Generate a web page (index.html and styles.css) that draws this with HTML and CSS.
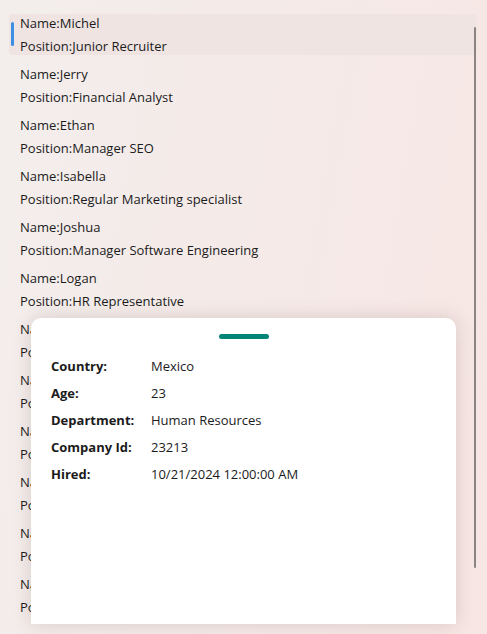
FILE: index.html
```html
<!DOCTYPE html>
<html lang="en">

<head>
    <meta charset="UTF-8">
    <meta name="viewport" content="width=device-width, initial-scale=1.0">
    <title>Employees</title>
    <link rel="stylesheet" href="styles.css">
</head>

<body>

    <div class="page">
        <div class="employee-list">
            <div class="employee selected">
                <div>Name:Michel</div>
                <div>Position:Junior Recruiter</div>
            </div>
            <div class="employee">
                <div>Name:Jerry</div>
                <div>Position:Financial Analyst</div>
            </div>
            <div class="employee">
                <div>Name:Ethan</div>
                <div>Position:Manager SEO</div>
            </div>
            <div class="employee">
                <div>Name:Isabella</div>
                <div>Position:Regular Marketing specialist</div>
            </div>
            <div class="employee">
                <div>Name:Joshua</div>
                <div>Position:Manager Software Engineering</div>
            </div>
            <div class="employee">
                <div>Name:Logan</div>
                <div>Position:HR Representative</div>
            </div>
            <div class="employee">
                <div>Name:Olivia</div>
                <div>Position:Senior Accountant</div>
            </div>
            <div class="employee">
                <div>Name:Sophia</div>
                <div>Position:Product Designer</div>
            </div>
            <div class="employee">
                <div>Name:Noah</div>
                <div>Position:Sales Manager</div>
            </div>
            <div class="employee">
                <div>Name:Emma</div>
                <div>Position:Office Coordinator</div>
            </div>
            <div class="employee">
                <div>Name:Liam</div>
                <div>Position:QA Engineer</div>
            </div>
            <div class="employee">
                <div>Name:Mia</div>
                <div>Position:Legal Advisor</div>
            </div>
        </div>

        <div class="scrollbar"></div>

        <div class="sheet">
            <div class="handle"></div>
            <div class="details">
                <div class="label">Country:</div>
                <div class="value">Mexico</div>
                <div class="label">Age:</div>
                <div class="value">23</div>
                <div class="label">Department:</div>
                <div class="value">Human Resources</div>
                <div class="label">Company Id:</div>
                <div class="value">23213</div>
                <div class="label">Hired:</div>
                <div class="value">10/21/2024 12:00:00 AM</div>
            </div>
        </div>
    </div>

</body>

</html>
```

FILE: styles.css
```css
html,
body {
    margin: 0;
    height: 100%;
}

body {
    font-family: "Segoe UI", "Open Sans", "Noto Sans", sans-serif;
    font-size: 13px;
    color: #1b1b1b;
    background: linear-gradient(100deg, #f3eeec 0%, #f5e9e7 60%, #f7e6e3 100%);
    overflow: hidden;
}

.page {
    position: relative;
    height: 634px;
}

.employee-list {
    padding: 14px 10px 0 9px;
    display: flex;
    flex-direction: column;
    gap: 10px;
}

.employee {
    position: relative;
    height: 41px;
    padding-left: 11px;
    border-radius: 4px;
    display: flex;
    flex-direction: column;
    justify-content: center;
    line-height: 23px;
}

.employee.selected {
    background-color: #efe4e2;
}

.employee.selected::before {
    content: "";
    position: absolute;
    left: 2px;
    top: 8px;
    width: 3px;
    height: 24px;
    border-radius: 2px;
    background-color: #3d8fe3;
}

.scrollbar {
    position: absolute;
    left: 474px;
    top: 27px;
    width: 2px;
    height: 541px;
    border-radius: 1px;
    background-color: #8c8383;
}

.sheet {
    position: absolute;
    left: 31px;
    top: 318px;
    width: 425px;
    height: 306px;
    background-color: #ffffff;
    border-radius: 10px 10px 0 0;
    box-shadow: 0 0 18px rgba(90, 60, 55, 0.18);
}

.handle {
    width: 50px;
    height: 5px;
    margin: 16px auto 0;
    border-radius: 3px;
    background-color: #008577;
}

.details {
    display: grid;
    grid-template-columns: 100px 1fr;
    grid-auto-rows: 27px;
    align-items: center;
    padding: 13px 20px 0;
}

.label {
    font-weight: bold;
}
```
